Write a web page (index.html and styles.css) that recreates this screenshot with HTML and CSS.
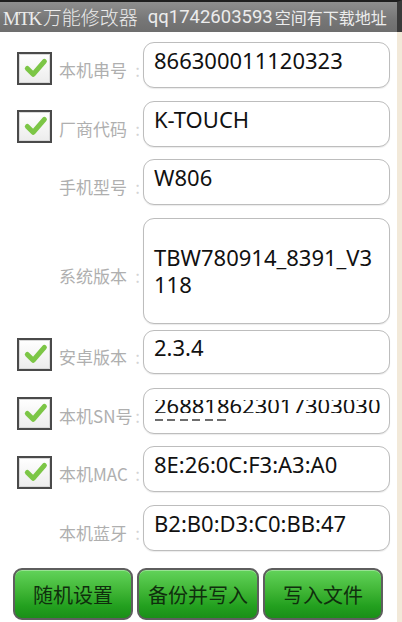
FILE: index.html
```html
<!DOCTYPE html>
<html lang="zh-CN">
<head>
	<meta charset="UTF-8">
	<title>MTK万能修改器</title>
	<link rel="stylesheet" href="styles.css">
</head>
<body>
	<div class="phone">
		<header class="titlebar">
			<span class="app-name"><span class="latin">MTK</span>万能修改器</span>
			<span class="qq">qq1742603593</span>
			<span class="tip">空间有下载地址</span>
		</header>

		<div class="body">
			<main class="panel">
				<div class="row">
					<span class="check"><svg viewBox="0 0 32 30"><path d="M8 15 L14.5 21.5 L27 7"/></svg></span>
					<label class="label">本机串号<i>:</i></label>
					<div class="field">866300011120323</div>
				</div>

				<div class="row">
					<span class="check"><svg viewBox="0 0 32 30"><path d="M8 15 L14.5 21.5 L27 7"/></svg></span>
					<label class="label">厂商代码<i>:</i></label>
					<div class="field">K-TOUCH</div>
				</div>

				<div class="row">
					<span class="nocheck"></span>
					<label class="label">手机型号<i>:</i></label>
					<div class="field">W806</div>
				</div>

				<div class="row row-tall">
					<span class="nocheck"></span>
					<label class="label">系统版本<i>:</i></label>
					<div class="field field-multi">TBW780914_8391_V3<br>118</div>
				</div>

				<div class="row row-short">
					<span class="check"><svg viewBox="0 0 32 30"><path d="M8 15 L14.5 21.5 L27 7"/></svg></span>
					<label class="label">安卓版本<i>:</i></label>
					<div class="field">2.3.4</div>
				</div>

				<div class="row">
					<span class="check"><svg viewBox="0 0 32 30"><path d="M8 15 L14.5 21.5 L27 7"/></svg></span>
					<label class="label">本机SN号<i>:</i></label>
					<div class="field field-scroll">
						<!-- 输入框内容已滚动，只露出一部分 -->
						<div class="clip"><div class="clip-text">268818623017303030</div></div>
						<div class="dashes"></div>
					</div>
				</div>

				<div class="row">
					<span class="check"><svg viewBox="0 0 32 30"><path d="M8 15 L14.5 21.5 L27 7"/></svg></span>
					<label class="label">本机MAC<i>:</i></label>
					<div class="field">8E:26:0C:F3:A3:A0</div>
				</div>

				<div class="row">
					<span class="nocheck"></span>
					<label class="label">本机蓝牙<i>:</i></label>
					<div class="field">B2:B0:D3:C0:BB:47</div>
				</div>

				<div class="buttons">
					<button class="btn">随机设置</button>
					<button class="btn btn-wide">备份并写入</button>
					<button class="btn">写入文件</button>
				</div>
			</main>
			<div class="edge"></div>
		</div>
	</div>
</body>
</html>
```

FILE: styles.css
```css
* {
	margin: 0;
	padding: 0;
	box-sizing: border-box;
}

body {
	width: 402px;
	height: 622px;
	overflow: hidden;
	background: #f2e9d9;
	font-family: "Noto Sans", "Noto Sans CJK SC", sans-serif;
}

.phone {
	width: 402px;
	height: 622px;
	display: flex;
	flex-direction: column;
}

/* 标题栏 */
.titlebar {
	height: 32px;
	display: flex;
	align-items: center;
	padding-left: 3px;
	border-top: 2px solid #1e1e1e;
	border-right: 5px solid #3a3a3a;
	background: linear-gradient(#8e8e8e, #767676 60%, #6e6e6e);
	color: #ececec;
	white-space: nowrap;
}

.app-name {
	font-family: "Noto Sans CJK SC", sans-serif;
	font-weight: 300;
	font-size: 19px;
	line-height: 1;
}

.app-name .latin {
	font-family: "Liberation Serif", serif;
	font-weight: normal;
	font-size: 19px;
	letter-spacing: -1.5px;
	margin-right: 2px;
}

.qq {
	margin-left: 10px;
	font-family: Roboto, sans-serif;
	font-size: 18.5px;
	line-height: 1;
}

.tip {
	margin-left: 2px;
	font-family: "Noto Sans CJK SC", sans-serif;
	font-size: 16px;
	line-height: 1;
}

.body {
	flex: 1;
	display: flex;
}

.panel {
	width: 397px;
	background: #fff;
	padding-top: 10px;
	display: flex;
	flex-direction: column;
}

.edge {
	flex: 1;
	background: #f2e9d9;
}

/* 表单行 */
.row {
	height: 46px;
	display: flex;
	align-items: center;
	margin-bottom: 12.5px;
}

.row-tall {
	height: 106px;
	margin-bottom: 6px;
}

.row-short {
	height: 44px;
	margin-bottom: 14px;
}

.check,
.nocheck {
	width: 35px;
	height: 33px;
	margin-left: 17px;
	margin-right: 7px;
	margin-top: 6px;
	flex-shrink: 0;
}

.check {
	border: 2px solid #4a4a4a;
	background: linear-gradient(#ffffff, #ececec);
	box-shadow: inset 0 0 0 1px #d8d8d8;
	display: flex;
	align-items: center;
	justify-content: center;
}

.check svg {
	width: 29px;
	height: 27px;
	fill: none;
	stroke: #7cc646;
	stroke-width: 5.5;
	stroke-linecap: round;
	stroke-linejoin: round;
}

.label {
	width: 84px;
	display: flex;
	justify-content: space-between;
	margin-top: 9px;
	font-family: "Noto Sans CJK SC", sans-serif;
	font-size: 17px;
	color: #afafaf;
	white-space: nowrap;
}

.label i {
	font-style: normal;
	color: #d4d4d4;
	padding-right: 3px;
}

.field {
	width: 247px;
	height: 100%;
	display: flex;
	align-items: center;
	padding: 0 10px 10px;
	border: 1.5px solid #bdbdbd;
	border-radius: 11px;
	background: #fff;
	box-shadow: 0 1px 1px rgba(0, 0, 0, 0.08);
	font-size: 22px;
	line-height: 26px;
	color: #111;
	white-space: nowrap;
}

.field-multi {
	padding-bottom: 0;
	line-height: 27px;
	white-space: normal;
}

.field-scroll {
	flex-direction: column;
	align-items: flex-start;
	padding: 0 0 0 10px;
}

.clip {
	height: 13px;
	margin-top: 11.5px;
	overflow: hidden;
}

.clip-text {
	margin-top: -8.5px;
}

.dashes {
	width: 75px;
	height: 2px;
	margin-top: 6px;
	margin-left: 1px;
	background: repeating-linear-gradient(to right, #6e6e6e 0 8px, transparent 8px 12.5px);
}

/* 底部按钮 */
.buttons {
	display: flex;
	gap: 4px;
	padding-left: 13px;
	margin-top: 5px;
}

.btn {
	width: 120px;
	height: 52px;
	border: 2px solid #5e5e5e;
	border-radius: 9px;
	background: linear-gradient(#62d35a, #3fb535 45%, #23a01f 75%, #1a8f18);
	box-shadow: inset 0 1px 0 rgba(255, 255, 255, 0.35);
	font-family: "Noto Sans CJK SC", sans-serif;
	font-size: 20px;
	color: #0f2f0d;
	cursor: pointer;
}

.btn-wide {
	width: 122px;
}
```
